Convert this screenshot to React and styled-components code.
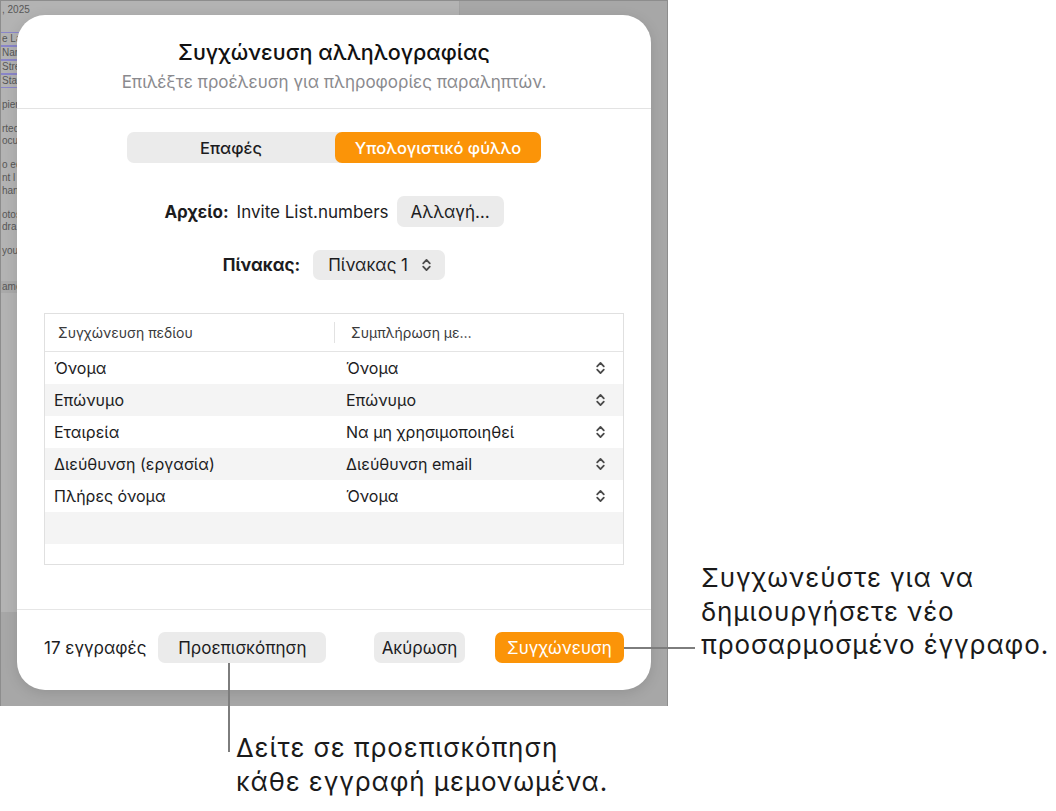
import React from "react";
import styled, { createGlobalStyle } from "styled-components";

const GlobalStyle = createGlobalStyle`
  body {
    margin: 0;
    background: #ffffff;
    font-family: Inter, "Noto Sans", sans-serif;
    color: #1c1c1e;
  }
`;

const Figure = styled.div`
  position: relative;
  width: 1056px;
  height: 811px;
  overflow: hidden;
  background: #ffffff;
`;

const Screen = styled.div`
  display: grid;
  width: 668px;
  height: 706px;
  box-sizing: border-box;
  border: 1px solid #8d8d8d;
  border-bottom: none;
  background: #a7a7a7;
  & > * {
    grid-area: 1 / 1;
  }
`;

const Backdrop = styled.div`
  display: grid;
  grid-template-columns: 459px 1fr;
  grid-template-rows: 611px 1fr;
`;

const DocPage = styled.div`
  background: #b3b3b3;
  border-right: 1px solid #a2a2a2;
  overflow: hidden;
  display: flex;
  flex-direction: column;
  font-family: "Liberation Sans", sans-serif;
  font-size: 10px;
  color: #575757;
`;

const DocLine = styled.div`
  height: 12px;
  line-height: 12px;
  padding-left: 1px;
  margin-top: ${(p) => p.$gap || 0}px;
  white-space: nowrap;
  border: ${(p) => (p.$boxed ? "1px solid #8a86c9" : "none")};
  border-left: none;
  background: ${(p) => (p.$band ? "#a9a9a9" : "transparent")};
`;

const Dialog = styled.div`
  margin: 14px 16px 16px 16px;
  background: #ffffff;
  border-radius: 28px;
  box-shadow: 0 3px 14px rgba(0, 0, 0, 0.12);
  display: flex;
  flex-direction: column;
  overflow: hidden;
`;

const Header = styled.div`
  padding: 24px 20px 15px;
  border-bottom: 1px solid #e3e3e3;
  text-align: center;
`;

const Title = styled.div`
  font-size: 21.5px;
  line-height: 27px;
  font-weight: 500;
  color: #111;
`;

const Subtitle = styled.div`
  margin-top: 5px;
  font-size: 17px;
  line-height: 22px;
  color: #8a8a8e;
`;

const Body = styled.div`
  flex: 1;
  padding: 23px 27px 0;
  display: flex;
  flex-direction: column;
  align-items: center;
`;

const Segmented = styled.div`
  display: grid;
  grid-template-columns: 208px 206px;
  height: 31px;
  border-radius: 7px;
  background: #ebebeb;
`;

const Segment = styled.div`
  display: flex;
  align-items: center;
  justify-content: center;
  border-radius: 7px;
  font-size: 16.5px;
  font-weight: 500;
  background: ${(p) => (p.$active ? "#fb9408" : "transparent")};
  color: ${(p) => (p.$active ? "#ffffff" : "#1c1c1e")};
`;

const FieldRow = styled.div`
  display: flex;
  align-items: center;
  gap: ${(p) => p.$gap || 8}px;
  margin-top: ${(p) => p.$top}px;
  font-size: 17px;
`;

const FieldLabel = styled.span`
  font-weight: 700;
`;

const Button = styled.div`
  display: flex;
  align-items: center;
  justify-content: ${(p) => (p.$between ? "space-between" : "center")};
  box-sizing: border-box;
  width: ${(p) => p.$w}px;
  height: ${(p) => p.$h || 31}px;
  padding: ${(p) => (p.$between ? "0 13px 0 15px" : "0")};
  border-radius: 7px;
  font-size: 17px;
  background: ${(p) => (p.$primary ? "#fb9408" : "#ebebeb")};
  color: ${(p) => (p.$primary ? "#ffffff" : "#1c1c1e")};
`;

const Table = styled.div`
  align-self: stretch;
  margin-top: 33px;
  height: 252px;
  box-sizing: border-box;
  border: 1px solid #e0e0e0;
  overflow: hidden;
`;

const HeaderRow = styled.div`
  display: grid;
  grid-template-columns: 289px 1fr;
  height: 37px;
  align-items: center;
  border-bottom: 1px solid #e4e4e4;
  font-size: 14px;
  color: #3a3a3c;
`;

const HeaderCell = styled.div`
  padding-left: ${(p) => p.$pad}px;
  height: 21px;
  line-height: 21px;
  border-left: ${(p) => (p.$sep ? "1px solid #e2e2e2" : "none")};
`;

const Row = styled.div`
  display: grid;
  grid-template-columns: 292px 1fr auto;
  align-items: center;
  height: 32px;
  padding: 0 17px 0 9px;
  font-size: 16px;
  color: #1c1c1e;
  &:nth-child(odd) {
    background: #f4f4f4;
  }
`;

const ChevronSvg = styled.svg`
  display: block;
  color: #4a4a4a;
`;

const UpDown = () => (
  <ChevronSvg width="11" height="14" viewBox="0 0 11 14" fill="none">
    <path
      d="M2.2 5.3 L5.5 1.9 L8.8 5.3 M2.2 8.7 L5.5 12.1 L8.8 8.7"
      stroke="currentColor"
      strokeWidth="1.8"
      strokeLinecap="round"
      strokeLinejoin="round"
    />
  </ChevronSvg>
);

const Footer = styled.div`
  display: flex;
  align-items: center;
  padding: 22px 27px 27px;
  border-top: 1px solid #e6e6e6;
  font-size: 17px;
`;

const Count = styled.span`
  margin-right: 12px;
`;

const Spacer = styled.div`
  flex: 1;
`;

const CalloutLine = styled.div`
  position: absolute;
  left: ${(p) => p.$x}px;
  top: ${(p) => p.$y}px;
  width: ${(p) => p.$w}px;
  height: ${(p) => p.$h}px;
  background: #7d7d7d;
`;

const CalloutText = styled.div`
  position: absolute;
  left: ${(p) => p.$x}px;
  top: ${(p) => p.$y}px;
  font-family: Inter, "Noto Sans", sans-serif;
  font-size: 26px;
  letter-spacing: 0.9px;
  line-height: 33.5px;
  color: #1a1a1a;
  white-space: nowrap;
`;

const fields = [
  ["Όνομα", "Όνομα"],
  ["Επώνυμο", "Επώνυμο"],
  ["Εταιρεία", "Να μη χρησιμοποιηθεί"],
  ["Διεύθυνση (εργασία)", "Διεύθυνση email"],
  ["Πλήρες όνομα", "Όνομα"],
];

const docLines = [
  { t: ", 2025", gap: 3 },
  { t: "e Las", gap: 16, boxed: true },
  { t: "Nar", boxed: true },
  { t: "Stre", boxed: true },
  { t: "Stat", boxed: true },
  { t: "pier", gap: 11 },
  { t: "rted", gap: 12 },
  { t: "ocu" },
  { t: "o ed", gap: 12 },
  { t: "nt l", gap: 1 },
  { t: "hang", gap: 1 },
  { t: "otos", gap: 12 },
  { t: "dra" },
  { t: "you", gap: 12 },
  { t: "ame", gap: 24, band: true },
];

const App = () => {
  return (
    <Figure>
      <GlobalStyle />
      <Screen>
        <Backdrop>
          <DocPage>
            {docLines.map((d, i) => (
              <DocLine key={i} $gap={d.gap} $boxed={d.boxed} $band={d.band}>
                {d.t}
              </DocLine>
            ))}
          </DocPage>
        </Backdrop>
        <Dialog>
          <Header>
            <Title>Συγχώνευση αλληλογραφίας</Title>
            <Subtitle>Επιλέξτε προέλευση για πληροφορίες παραληπτών.</Subtitle>
          </Header>
          <Body>
            <Segmented>
              <Segment>Επαφές</Segment>
              <Segment $active>Υπολογιστικό φύλλο</Segment>
            </Segmented>
            <FieldRow $top={33}>
              <FieldLabel>Αρχείο:</FieldLabel>
              <span>Invite List.numbers</span>
              <Button $w={107}>Αλλαγή…</Button>
            </FieldRow>
            <FieldRow $top={23} $gap={13}>
              <FieldLabel>Πίνακας:</FieldLabel>
              <Button $w={132} $h={30} $between>
                Πίνακας 1
                <UpDown />
              </Button>
            </FieldRow>
            <Table>
              <HeaderRow>
                <HeaderCell $pad={13}>Συγχώνευση πεδίου</HeaderCell>
                <HeaderCell $pad={16} $sep>
                  Συμπλήρωση με…
                </HeaderCell>
              </HeaderRow>
              {fields.map(([a, b]) => (
                <Row key={a}>
                  <span>{a}</span>
                  <span>{b}</span>
                  <UpDown />
                </Row>
              ))}
              <Row />
              <Row />
            </Table>
          </Body>
          <Footer>
            <Count>17 εγγραφές</Count>
            <Button $w={168}>Προεπισκόπηση</Button>
            <Spacer />
            <Button $w={91}>Ακύρωση</Button>
            <Button $w={129} $primary style={{ marginLeft: 30 }}>
              Συγχώνευση
            </Button>
          </Footer>
        </Dialog>
      </Screen>
      <CalloutLine $x={624} $y={647} $w={71} $h={2} />
      <CalloutText $x={701} $y={561}>
        Συγχωνεύστε για να
        <br />
        δημιουργήσετε νέο
        <br />
        προσαρμοσμένο έγγραφο.
      </CalloutText>
      <CalloutLine $x={228} $y={663} $w={2} $h={89} />
      <CalloutText $x={236} $y={731}>
        Δείτε σε προεπισκόπηση
        <br />
        κάθε εγγραφή μεμονωμένα.
      </CalloutText>
    </Figure>
  );
};

export default App;
